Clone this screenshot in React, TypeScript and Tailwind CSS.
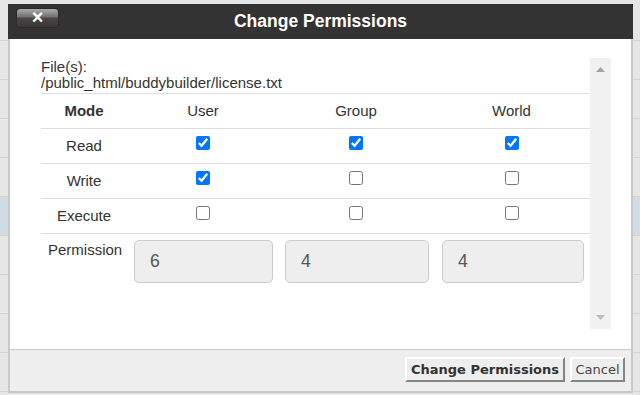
import React from "react";

function Check({ checked }: { checked: boolean }) {
  return (
    <input
      type="checkbox"
      defaultChecked={checked}
      className="w-[14px] h-[14px] m-0 mb-[6px] accent-[#0075ff]"
    />
  );
}

export default function App() {
  const bgRows = Array.from({ length: 11 });
  const rows: { label: string; vals: boolean[] }[] = [
    { label: "Read", vals: [true, true, true] },
    { label: "Write", vals: [true, false, false] },
    { label: "Execute", vals: [false, false, false] },
  ];
  return (
    <div className="relative w-[640px] h-[395px] overflow-hidden bg-[#e6e6e6] font-['Liberation_Sans',Arial,sans-serif] text-[#333]">
      {/* background list */}
      <div className="flex flex-col pt-[2px]">
        {bgRows.map((_, i) => (
          <div
            key={i}
            className={
              i === 5
                ? "h-[39px] border-b border-[#d4d4d4] bg-[#d0dde5]"
                : "h-[39px] border-b border-[#d4d4d4]"
            }
          />
        ))}
      </div>

      {/* dialog */}
      <div className="absolute left-[8px] top-[4px] w-[625px] flex flex-col">
        <div className="relative h-[35px] bg-[#333333] flex items-center justify-center">
          <button className="absolute left-[8px] top-[4px] w-[43px] h-[20px] rounded-[4px] border border-[#2a2a2a] bg-[linear-gradient(#ababab,#737373_42%,#4a4545_52%,#3d3838)] flex items-center justify-center text-white font-bold text-[20px] leading-none pb-[2px]">
            ×
          </button>
          <div className="text-white font-bold text-[17.5px] leading-none">Change Permissions</div>
        </div>

        <div className="h-[310px] bg-white border-x-2 border-[#c9c9c9] pt-[19px] pl-[31px] pr-[20px] flex">
          <div className="w-[549px] h-[271px] flex flex-col text-[15px]">
            <div className="pt-[1px] pb-[2px] leading-[16px]">
              <div>File(s):</div>
              <div>/public_html/buddybuilder/license.txt</div>
            </div>
            <div className="grid grid-cols-[86px_152px_154px_157px]">
              <div className="h-[35px] border-t border-[#dddddd] flex items-center justify-center font-bold">Mode</div>
              <div className="h-[35px] border-t border-[#dddddd] flex items-center justify-center">User</div>
              <div className="h-[35px] border-t border-[#dddddd] flex items-center justify-center">Group</div>
              <div className="h-[35px] border-t border-[#dddddd] flex items-center justify-center">World</div>
              {rows.map((r) => (
                <React.Fragment key={r.label}>
                  <div className="h-[35px] border-t border-[#dddddd] flex items-center justify-center">{r.label}</div>
                  {r.vals.map((v, j) => (
                    <div key={j} className="h-[35px] border-t border-[#dddddd] flex items-center justify-center">
                      <Check checked={v} />
                    </div>
                  ))}
                </React.Fragment>
              ))}
            </div>
            <div className="border-t border-[#dddddd] pt-[6px] flex">
              <div className="w-[93px] pl-[7px] pt-[2px] leading-[16px]">Permission</div>
              <div className="w-[139px] h-[43px] bg-[#eeeeee] border border-[#cccccc] rounded-[5px] flex items-center pl-[15px] text-[17.5px] text-[#555]">6</div>
              <div className="ml-[12px] w-[144px] h-[43px] bg-[#eeeeee] border border-[#cccccc] rounded-[5px] flex items-center pl-[15px] text-[17.5px] text-[#555]">4</div>
              <div className="ml-[13px] w-[142px] h-[43px] bg-[#eeeeee] border border-[#cccccc] rounded-[5px] flex items-center pl-[15px] text-[17.5px] text-[#555]">4</div>
            </div>
          </div>
          <div className="w-[21px] h-[271px] bg-[#f1f1f1] flex flex-col items-center justify-between py-[9px]">
            <svg width="9" height="5" viewBox="0 0 9 5">
              <path d="M0 5 L4.5 0 L9 5 Z" fill="#a3a3a3" />
            </svg>
            <svg width="9" height="5" viewBox="0 0 9 5">
              <path d="M0 0 L9 0 L4.5 5 Z" fill="#bdbdbd" />
            </svg>
          </div>
        </div>

        <div className="h-[44px] bg-[#eeeeee] border-t border-[#cccccc] border-x-2 border-b-2 border-x-[#c9c9c9] border-b-[#c9c9c9] flex justify-end items-start pt-[7px] pr-[6px] gap-[5px] font-['DejaVu_Sans',sans-serif] text-[13px]">
          <button className="h-[25px] w-[160px] bg-[#eeeeee] border-2 border-t-white border-l-white border-r-[#858585] border-b-[#858585] font-bold text-[#333] leading-none">
            Change Permissions
          </button>
          <button className="h-[25px] w-[55px] bg-[#eeeeee] border-2 border-t-white border-l-white border-r-[#858585] border-b-[#858585] text-[#444] leading-none">
            Cancel
          </button>
        </div>
      </div>
    </div>
  );
}
